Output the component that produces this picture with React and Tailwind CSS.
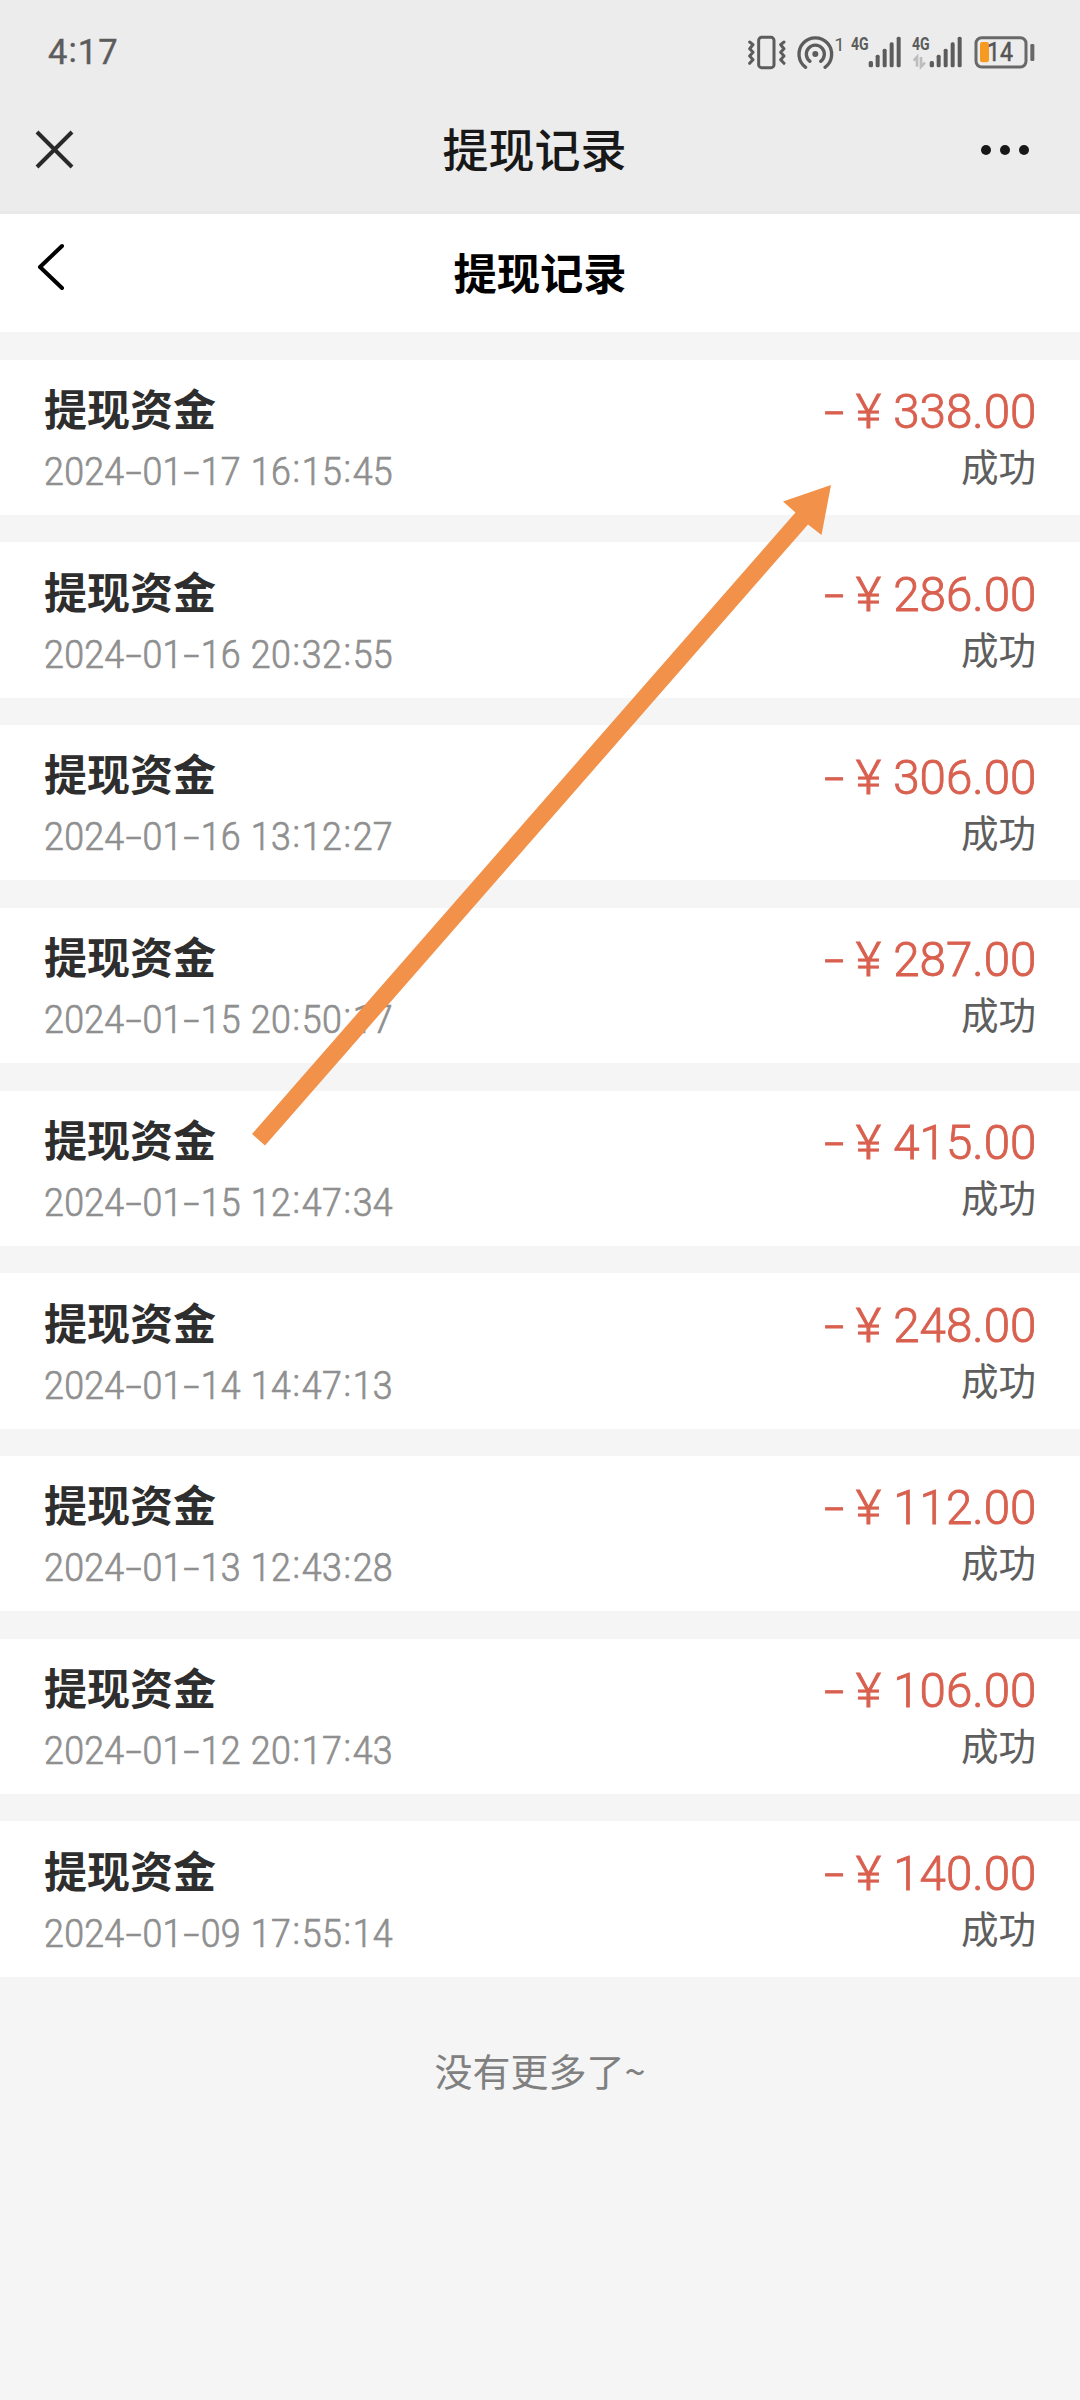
import React from "react";

const records = [
  ["2024-01-17 16:15:45", "338.00"],
  ["2024-01-16 20:32:55", "286.00"],
  ["2024-01-16 13:12:27", "306.00"],
  ["2024-01-15 20:50:17", "287.00"],
  ["2024-01-15 12:47:34", "415.00"],
  ["2024-01-14 14:47:13", "248.00"],
  ["2024-01-13 12:43:28", "112.00"],
  ["2024-01-12 20:17:43", "106.00"],
  ["2024-01-09 17:55:14", "140.00"],
];

function VibrateIcon() {
  return (
    <svg className="h-[70px] w-[45px]" viewBox="40 0 135 210" fill="none" stroke="#5c5c5c">
      <rect x="84" y="52" width="46" height="91" rx="9" strokeWidth="9" />
      <path d="M57 66l10 8-10 12 10 11-10 11 10 11-10 11M160 66l-10 8 10 12-10 11 10 11-10 11 10 11" strokeWidth="9" strokeLinecap="round" strokeLinejoin="round" />
    </svg>
  );
}

function HotspotIcon() {
  return (
    <svg className="h-[70px] w-[60px]" viewBox="175 0 180 210" fill="none" stroke="#5c5c5c">
      <circle cx="254" cy="102" r="9" fill="#5c5c5c" stroke="none" />
      <path d="M225 142A49 49 0 1 1 283 142M238 124A27 27 0 1 1 270 124" strokeWidth="10" strokeLinecap="round" />
      <text x="311" y="92" fill="#5c5c5c" stroke="none" fontFamily="Roboto, sans-serif" fontWeight="400" fontSize="56">1</text>
    </svg>
  );
}

function SignalIcon({ data }) {
  return (
    <svg className={data ? "h-[70px] w-[61px]" : "h-[70px] w-[56px]"} viewBox={data ? "340 0 183 210" : "355 0 168 210"} fill="#5c5c5c">
      <text x="361" y="89" fontFamily="Roboto, sans-serif" fontWeight="700" fontSize="54" textLength="53" lengthAdjust="spacingAndGlyphs">4G</text>
      <rect x="414" y="123" width="13" height="19" rx="5" />
      <rect x="435" y="104" width="12" height="38" rx="5" />
      <rect x="456" y="86" width="12" height="56" rx="5" />
      <rect x="477" y="67" width="12" height="75" rx="5" />
      <rect x="498" y="50" width="12" height="92" rx="5" />
      {data && <path d="M366 122l10-11v29M388 111v29l12-12" fill="none" stroke="#bdbdbd" strokeWidth="8" />}
    </svg>
  );
}

function BatteryIcon() {
  return (
    <svg className="h-[70px] w-[69px]" viewBox="706 0 207 210">
      <rect x="736" y="53" width="150" height="88" rx="17" fill="none" stroke="#686868" strokeWidth="9" />
      <rect x="748" y="66" width="27" height="61" rx="7" fill="#f79a22" />
      <rect x="899" y="72" width="12" height="51" rx="4" fill="#686868" />
      <text x="769" y="123" fill="#555" stroke="#555" strokeWidth="1.5" fontFamily="Roboto, sans-serif" fontSize="76" textLength="78" lengthAdjust="spacingAndGlyphs">14</text>
    </svg>
  );
}

function DateText({ value }) {
  return (
    <div className="flex h-[46px] origin-left scale-x-[0.93] items-center font-[Roboto,sans-serif] text-[38.5px] leading-[46px] font-light whitespace-pre text-[#8f8f8f] [-webkit-text-stroke:0.7px_#8f8f8f]">
      {value.split("").map((c, i) =>
        c === "-" ? (
          <span key={i} className="w-[19.4px] text-center">
            <span className="inline-block scale-x-[1.6]">-</span>
          </span>
        ) : c === ":" ? (
          <span key={i} className="w-[11.6px] -translate-y-[3px] text-center">:</span>
        ) : c === " " ? (
          <span key={i} className="w-[10.8px]"> </span>
        ) : (
          <span key={i} className="w-[21.6px] text-center">{c}</span>
        )
      )}
    </div>
  );
}

function Record({ date, amount }) {
  return (
    <li className="flex h-[155.3px] justify-between bg-white pr-[44px] pl-[44px]">
      <div className="pt-[17.3px]">
        <div className="text-[43px] leading-[60px] font-bold text-[#2e2e2e]">提现资金</div>
        <div className="pt-[12px]">
          <DateText value={date} />
        </div>
      </div>
      <div className="flex flex-col items-end pt-[22.5px]">
        <div className="flex h-[60px] origin-right scale-x-[0.97] items-center font-[Roboto,sans-serif] text-[49px] leading-[60px] font-light text-[#d9604f] [-webkit-text-stroke:0.9px_#d9604f]">
          <span className="mr-[16px] inline-block scale-x-[1.5]">-</span>
          <span className="mr-[13px] inline-block scale-x-[1.06] text-[48px]">¥</span>
          <span>{amount}</span>
        </div>
        <div className="-mt-[2px] text-[37.5px] leading-[50px] text-[#5e5e5e]">成功</div>
      </div>
    </li>
  );
}

export default function App() {
  return (
    <div className="relative h-[2400px] w-[1080px] overflow-hidden bg-[#f5f5f5] font-['Noto_Sans_CJK_SC',sans-serif]">
      <header className="h-[214px] border-b-[3px] border-[#e9e9e9] bg-[#ececec]">
        <div className="flex h-[90px] items-end justify-between pr-[45px] pl-[48px]">
          <div className="mb-[18px] font-[Roboto,sans-serif] text-[34.5px] leading-[40px] tracking-[1px] text-[#5c5c5c] [-webkit-text-stroke:0.4px_#5c5c5c]">
            4<span className="inline-block -translate-y-[2px]">:</span>17
          </div>
          <div className="flex">
            <VibrateIcon />
            <HotspotIcon />
            <SignalIcon />
            <SignalIcon data />
            <BatteryIcon />
          </div>
        </div>
        <div className="grid h-[120px] grid-cols-3 items-center pr-[45px] pl-[34px]">
          <svg className="h-[40px] w-[40px]" viewBox="0 0 40 40" fill="none" stroke="#292929" strokeWidth="4">
            <path d="M3 2L38 37M38 2L3 37" />
          </svg>
          <h1 className="mb-[6px] text-center text-[46px] leading-[60px] font-medium whitespace-nowrap text-[#181818]">提现记录</h1>
          <svg className="mb-[1px] h-[12px] w-[50px] -translate-x-[5px] justify-self-end" viewBox="0 0 50 12" fill="#181818">
            <circle cx="6" cy="6" r="5" />
            <circle cx="25" cy="6" r="5" />
            <circle cx="44" cy="6" r="5" />
          </svg>
        </div>
      </header>
      <nav className="grid h-[118px] grid-cols-3 items-center bg-white px-[36px]">
        <svg className="mb-[13px] h-[48px] w-[30px]" viewBox="0 0 30 48" fill="none" stroke="#000" strokeWidth="4" strokeLinecap="round" strokeLinejoin="round">
          <path d="M26 3L4 24L26 45" />
        </svg>
        <h2 className="mb-[4px] text-center text-[43.3px] leading-[60px] font-bold whitespace-nowrap text-black">提现记录</h2>
      </nav>
      <ul className="mt-[27.8px] flex flex-col gap-[27.4px]">
        {records.map(([date, amount]) => (
          <Record key={date} date={date} amount={amount} />
        ))}
      </ul>
      <p className="pt-[63px] text-center text-[38px] leading-[60px] text-[#808080]">没有更多了~</p>
      <svg className="pointer-events-none absolute inset-0 h-[2400px] w-[1080px]" viewBox="0 0 1080 2400">
        <path d="M831 485L783 501.500L795.500 512.500L252 1134L265 1145.500L808 524.500L821.500 535Z" fill="#f1914a" />
      </svg>
    </div>
  );
}
